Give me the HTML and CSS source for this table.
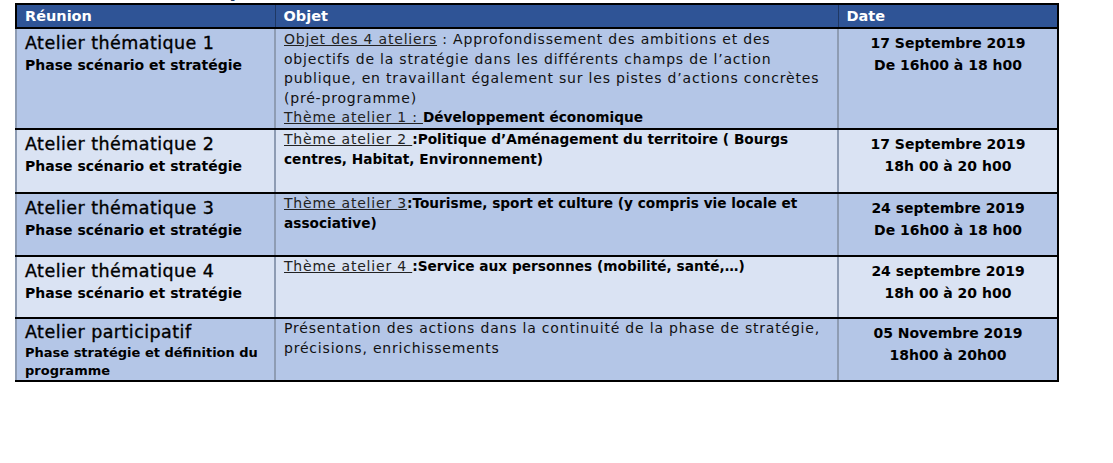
FILE: index.html
```html
<!DOCTYPE html>
<html lang="fr">
<head>
<meta charset="utf-8">
<link rel="stylesheet" href="styles.css">
</head>
<body>
<div class="page">
  <div class="cut-title">Calendrier prévisionnel</div>
  <table class="planning">
    <colgroup>
      <col class="c1"><col class="c2"><col class="c3">
    </colgroup>
    <thead>
      <tr class="head">
        <th>Réunion</th><th>Objet</th><th>Date</th>
      </tr>
    </thead>
    <tbody>
      <tr class="odd r1">
        <td class="reu"><div class="t">Atelier thématique 1</div><div class="s">Phase scénario et stratégie</div></td>
        <td class="obj o1"><span class="u">Objet des 4 ateliers</span> : Approfondissement des ambitions et des<br>objectifs de la stratégie dans les différents champs de l’action<br>publique, en travaillant également sur les pistes d’actions concrètes<br>(pré-programme)<br><span class="u">Thème atelier 1 : </span> <b>Développement économique</b></td>
        <td class="date">17 Septembre 2019<br>De 16h00 à 18 h00</td>
      </tr>
      <tr class="even r2">
        <td class="reu"><div class="t">Atelier thématique 2</div><div class="s">Phase scénario et stratégie</div></td>
        <td class="obj"><span class="u">Thème atelier 2 </span> <b>:Politique d’Aménagement du territoire ( Bourgs<br>centres, Habitat, Environnement)</b></td>
        <td class="date">17 Septembre 2019<br>18h 00 à 20 h00</td>
      </tr>
      <tr class="odd r3">
        <td class="reu"><div class="t">Atelier thématique 3</div><div class="s">Phase scénario et stratégie</div></td>
        <td class="obj"><span class="u">Thème atelier 3</span><b>:Tourisme, sport et culture (y compris vie locale et<br>associative)</b></td>
        <td class="date">24 septembre 2019<br>De 16h00 à 18 h00</td>
      </tr>
      <tr class="even r4">
        <td class="reu"><div class="t">Atelier thématique 4</div><div class="s">Phase scénario et stratégie</div></td>
        <td class="obj"><span class="u">Thème atelier 4 </span><b>:Service aux personnes (mobilité, santé,…)</b></td>
        <td class="date">24 septembre 2019<br>18h 00 à 20 h00</td>
      </tr>
      <tr class="odd r5">
        <td class="reu"><div class="t t5">Atelier participatif</div><div class="s s2">Phase stratégie et définition du<br>programme</div></td>
        <td class="obj">Présentation des actions dans la continuité de la phase de stratégie,<br>précisions, enrichissements</td>
        <td class="date">05 Novembre 2019<br>18h00 à 20h00</td>
      </tr>
    </tbody>
  </table>
</div>
</body>
</html>
```
FILE: styles.css
```css
html, body {
  margin: 0;
  padding: 0;
  background: #fff;
}
body {
  font-family: "DejaVu Sans", "Liberation Sans", sans-serif;
  color: #000;
}
.page {
  padding: 3px 0 0 15px;
  position: relative;
}
.cut-title {
  position: absolute;
  top: -22px;
  left: 105px;
  font-size: 20px;
  font-weight: bold;
  color: #1f3864;
  line-height: 24px;
  white-space: nowrap;
}
.planning {
  border-collapse: collapse;
  table-layout: fixed;
  width: 1042px;
  border: 2px solid #000;
  position: relative;
}
.c1 { width: 259px; }
.c2 { width: 563px; }
.c3 { width: 220px; }

.head th {
  background: #2f5496;
  color: #fff;
  font-weight: bold;
  font-size: 14.5px;
  text-align: left;
  height: 22px;
  padding: 0 8px;
  line-height: 22px;
  border-left: 1px solid #1f3864;
  border-bottom: 2px solid #000;
  vertical-align: middle;
}
td {
  vertical-align: top;
  padding: 3px 8px 0 8px;
  border-bottom: 2px solid #000;
  border-left: 2px solid #8e9cb3;
  font-size: 13.5px;
  line-height: 19.5px;
  white-space: nowrap;
  overflow: hidden;
}
.odd td { background: #b4c6e7; }
.even td { background: #dae3f3; }

.r1 td { height: 96px; }
.r2 td { height: 59px; }
.r3 td { height: 58px; }
.r4 td { height: 57px; }
.r5 td { height: 58px; }

.reu .t {
  font-size: 17.5px;
  letter-spacing: 0.45px;
  line-height: 22px;
  -webkit-text-stroke: 0.35px #000;
}
.reu .t5 {
  line-height: 20px;
}
.reu .s {
  font-size: 14px;
  font-weight: bold;
  line-height: 22px;
}
.reu .s2 {
  font-size: 13px;
  line-height: 17.5px;
  margin-top: 2px;
}
.obj {
  padding-top: 0;
  font-size: 14px;
  letter-spacing: 0.8px;
  line-height: 19.5px;
  color: #111;
}
.obj.o1 {
  padding-top: 1px;
}
.obj b {
  font-weight: bold;
  font-size: 13.7px;
  letter-spacing: 0;
  color: #000;
}
.u {
  text-decoration: underline;
  color: #222;
}
.date {
  text-align: center;
  font-weight: bold;
  font-size: 14px;
  line-height: 22px;
}
```
